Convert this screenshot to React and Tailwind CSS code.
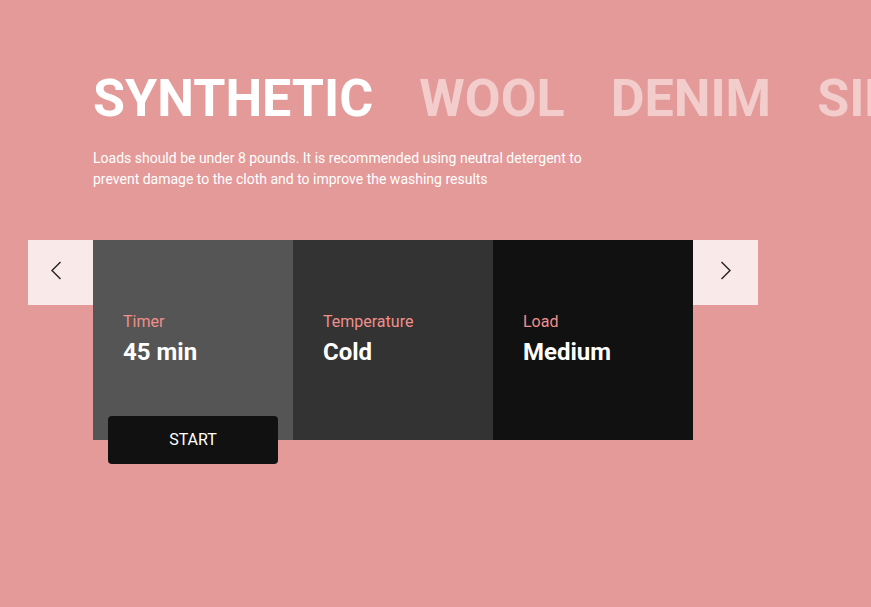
import React from "react";

const programs = ["SYNTHETIC", "WOOL", "DENIM", "SILK"];

const settings = [
  { label: "Timer", value: "45 min", bg: "bg-[#555555]" },
  { label: "Temperature", value: "Cold", bg: "bg-[#333333]" },
  { label: "Load", value: "Medium", bg: "bg-[#111111]" },
];

function Chevron({ dir }) {
  return (
    <svg width="12" height="19" viewBox="0 0 12 19" fill="none" stroke="#222" strokeWidth="1.4">
      {dir === "left" ? <path d="M10.5 1 2 9.5l8.5 8.5" /> : <path d="M1.5 1 10 9.5 1.5 18" />}
    </svg>
  );
}

export default function App() {
  return (
    <div className="min-h-screen h-[607px] w-full overflow-hidden bg-[#e49a99] font-['Roboto',sans-serif]">
      <div className="pl-[93px] pt-[73px]">
        <div className="flex gap-[46px] whitespace-nowrap">
          {programs.map((p, i) => (
            <h1
              key={p}
              className={`text-[52px] font-bold leading-none ${i === 0 ? "text-white" : "text-white/50"}`}
            >
              {p}
            </h1>
          ))}
        </div>
        <p className="mt-[23px] w-[500px] text-[14px] leading-[21px] text-white">
          Loads should be under 8 pounds. It is recommended using neutral detergent to prevent damage to the cloth
          and to improve the washing results
        </p>
      </div>

      <div className="mt-[50px] flex pl-[28px]">
        <button className="flex h-[65px] w-[65px] items-start justify-center bg-[#f9e9e9] pt-[21px] pr-[9px]">
          <Chevron dir="left" />
        </button>
        {settings.map((s, i) => (
          <div key={s.label} className={`relative h-[200px] w-[200px] ${s.bg} px-[30px] pt-[72px]`}>
            <div className="text-[16px] leading-[20px] text-[#f08f8b]">{s.label}</div>
            <div className="mt-[6px] text-[24px] font-bold leading-[28px] text-white">{s.value}</div>
            {i === 0 && (
              <button className="absolute -bottom-[24px] left-[15px] h-[48px] w-[170px] rounded-[4px] bg-[#111111] text-[16px] font-normal text-white">
                START
              </button>
            )}
          </div>
        ))}
        <button className="flex h-[65px] w-[65px] items-start justify-center bg-[#f9e9e9] pt-[21px]">
          <Chevron dir="right" />
        </button>
      </div>
    </div>
  );
}
